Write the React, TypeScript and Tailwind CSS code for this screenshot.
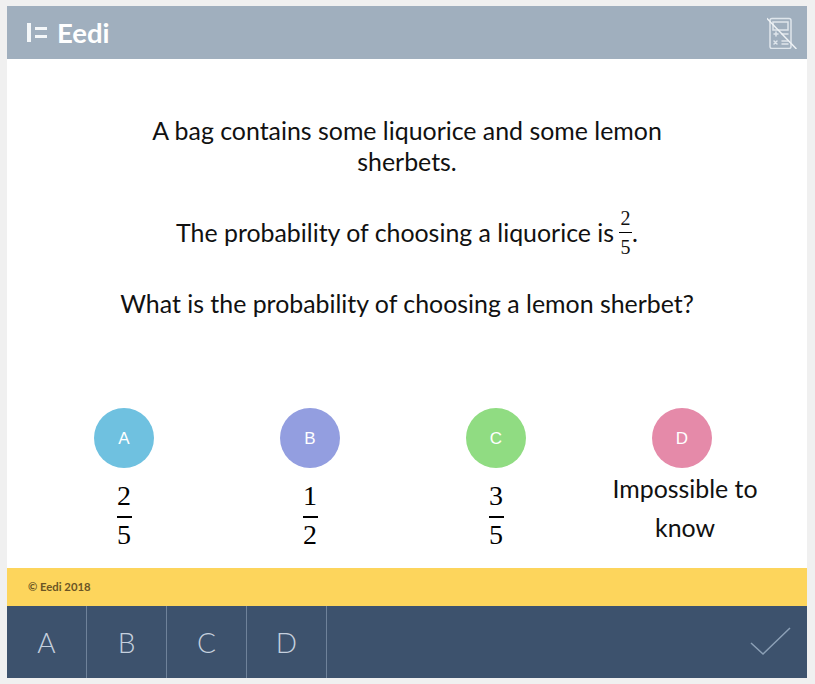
const bodyFont = "font-['Lato','Carlito','Noto_Sans',sans-serif]"

const choices = [
  { letter: 'A', color: 'bg-[#6fc1e0]', top: '2', bottom: '5' },
  { letter: 'B', color: 'bg-[#939ee0]', top: '1', bottom: '2' },
  { letter: 'C', color: 'bg-[#90dc82]', top: '3', bottom: '5' },
  { letter: 'D', color: 'bg-[#e58aa9]' },
]

function Fraction({ top, bottom, small = false }: { top: string; bottom: string; small?: boolean }) {
  if (small) {
    return (
      <span className="inline-flex flex-col items-center align-middle font-['Liberation_Serif',serif] text-[20px] leading-[20px]">
        <span>{top}</span>
        <span className="my-[4px] h-px w-[13px] bg-black" />
        <span>{bottom}</span>
      </span>
    )
  }
  return (
    <div className="flex flex-col items-center font-['Liberation_Serif',serif] text-[28px] leading-[26px] text-black">
      <span>{top}</span>
      <span className="mb-[4px] mt-[7px] h-[2px] w-[15px] bg-black" />
      <span>{bottom}</span>
    </div>
  )
}

function NoCalculator() {
  return (
    <svg width="30" height="32" viewBox="0 0 30 32" fill="none" stroke="#dfe6ec" strokeWidth="1.5" strokeLinecap="round">
      <rect x="3" y="1.5" width="21" height="30" rx="2" />
      <rect x="6" y="5" width="15" height="8" />
      <path d="M7 17h4M9 15v4M15 17h6M7 24l3 3M10 24l-3 3M15 24h6M15 27h6" />
      <path d="M0 1.5l29 30" stroke="#eef2f5" />
    </svg>
  )
}

export default function App() {
  return (
    <div className={`min-h-[684px] bg-[#f0f0f0] pb-[6px] pl-[7px] pr-2 pt-[6px] ${bodyFont}`}>
      <div className="flex h-[672px] flex-col bg-white">
        <header className="flex h-[53px] items-center justify-between bg-[#a0afbe] pl-[20px] pr-[10px]">
          <div className="flex items-center gap-[4px] text-white">
            <span className="h-[19px] w-[4px] bg-[#f4f7f9]" />
            <span className="flex flex-col gap-[5px]">
              <span className="h-[3px] w-[12px] bg-[#f4f7f9]" />
              <span className="h-[3px] w-[12px] bg-[#f4f7f9]" />
            </span>
            <span className="ml-[6px] text-[27.5px] font-bold leading-none">Eedi</span>
          </div>
          <NoCalculator />
        </header>

        <main className="flex flex-1 flex-col items-center">
          <div className="mt-[56px] w-[600px] text-center text-[24.9px] leading-[31px] text-[#111]">
            <p>A bag contains some liquorice and some lemon sherbets.</p>
            <p className="mt-[40px] flex h-[31px] items-center justify-center gap-[5px]">
              The probability of choosing a liquorice is
              <span className="flex items-center">
                <Fraction top="2" bottom="5" small />
                <span>.</span>
              </span>
            </p>
            <p className="mt-[40px]">What is the probability of choosing a lemon sherbet?</p>
          </div>

          <div className="mt-[89px] grid w-full grid-cols-4 pl-[24px] pr-[32px]">
            {choices.map((choice) => (
              <div key={choice.letter} className="flex flex-col items-center">
                <div className={`flex h-[60px] w-[60px] items-center justify-center rounded-full pt-[2px] font-['Liberation_Sans',sans-serif] text-[17px] text-white ${choice.color}`}>
                  {choice.letter}
                </div>
                <div className="mt-[15px] text-center text-[24.9px] leading-[39px] text-[#111]">
                  {choice.top && choice.bottom
                    ? <Fraction top={choice.top} bottom={choice.bottom} />
                    : <p className="ml-[6px] mt-[-14px] w-[170px]">Impossible to know</p>}
                </div>
              </div>
            ))}
          </div>
        </main>

        <div className="flex h-[38px] items-center bg-[#fdd55c] pl-[21px] pt-[1px] text-[11.3px] font-bold text-[#6b5525]">
          © Eedi 2018
        </div>

        <footer className="flex h-[72px] items-stretch justify-between bg-[#3d526d]">
          <div className="flex">
            {['A', 'B', 'C', 'D'].map((letter) => (
              <div key={letter} className="flex w-20 items-center justify-center border-r border-[#6f829a] pb-[1px] text-[28px] font-light text-[#c5d0de]">
                {letter}
              </div>
            ))}
          </div>
          <div className="flex items-center pr-[15px]">
            <svg width="42" height="30" viewBox="0 0 42 30" fill="none" stroke="#8ca0b6" strokeWidth="1.5">
              <path d="M1 16l12 11L40 1" />
            </svg>
          </div>
        </footer>
      </div>
    </div>
  )
}
